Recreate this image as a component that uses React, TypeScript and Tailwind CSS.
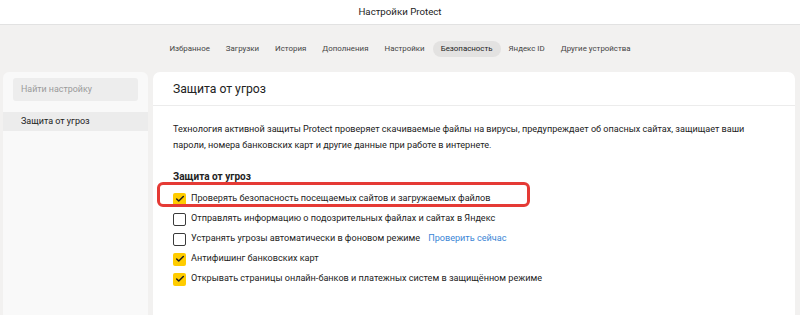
import { Check } from 'lucide-react';

const tabs = [
  { label: "Избранное" },
  { label: "Загрузки" },
  { label: "История" },
  { label: "Дополнения" },
  { label: "Настройки" },
  { label: "Безопасность", active: true },
  { label: "Яндекс ID" },
  { label: "Другие устройства" },
];

const options = [
  { label: "Проверять безопасность посещаемых сайтов и загружаемых файлов", checked: true, highlight: true },
  { label: "Отправлять информацию о подозрительных файлах и сайтах в Яндекс", checked: false },
  { label: "Устранять угрозы автоматически в фоновом режиме", checked: false, link: "Проверить сейчас" },
  { label: "Антифишинг банковских карт", checked: true },
  { label: "Открывать страницы онлайн-банков и платежных систем в защищённом режиме", checked: true },
];

function Checkbox({ checked }: { checked: boolean }) {
  if (checked) {
    return (
      <span className="w-[13px] h-[13px] rounded-[2px] bg-[#ffcc00] flex items-center justify-center shrink-0">
        <Check className="w-[10px] h-[10px] text-[#222]" strokeWidth={3.5} />
      </span>
    );
  }
  return <span className="w-[13px] h-[13px] rounded-[2px] border-[1.5px] border-[#3a3a3a] bg-white shrink-0" />;
}

export default function App() {
  return (
    <div
      className="w-[800px] h-[315px] overflow-hidden bg-[#f2f1f0] flex flex-col text-[#222]"
      style={{ fontFamily: 'Roboto, "Noto Sans", sans-serif' }}
    >
      {/* Title bar */}
      <div className="h-[25px] shrink-0 bg-white border-b border-[#e2e2e2] flex items-center justify-center text-[9.7px] text-[#222]">
        Настройки Protect
      </div>

      {/* Tabs */}
      <nav className="h-[47px] shrink-0 flex items-center justify-center text-[7.9px] text-[#444]">
        {tabs.map((t) => (
          <span
            key={t.label}
            className={
              t.active
                ? "px-2 h-[16px] flex items-center rounded-full bg-[#e3e2e1] text-[#222]"
                : "px-2 h-[16px] flex items-center"
            }
          >
            {t.label}
          </span>
        ))}
      </nav>

      <div className="flex-1 flex gap-[5px] px-[3px] min-h-0">
        {/* Sidebar */}
        <aside className="w-[145px] shrink-0 bg-[#f9f9f9] rounded-t-[6px] pt-[6px]">
          <div className="mx-[10px] h-[23px] rounded-[3px] bg-[#ededed] flex items-center px-[8px] text-[8.9px] text-[#9a9a9a]">
            Найти настройку
          </div>
          <div className="mt-[11px] h-[19px] bg-[#ececec] flex items-center pl-[18px] text-[9px]">
            Защита от угроз
          </div>
        </aside>

        {/* Main panel */}
        <main className="w-[642px] shrink-0 bg-white rounded-t-[7px]">
          <div className="h-[34px] border-b border-[#ececec] flex items-center px-[20px] text-[12.2px] pt-[1px]">
            Защита от угроз
          </div>
          <div className="px-[20px] pt-[15px]">
            <p className="text-[9.1px] leading-[16px] w-[580px]">
              Технология активной защиты Protect проверяет скачиваемые файлы на вирусы, предупреждает об опасных сайтах, защищает ваши пароли, номера банковских карт и другие данные при работе в интернете.
            </p>
            <div className="mt-[16px] text-[10px] font-bold leading-[16px]">Защита от угроз</div>
            <div className="mt-[4px] flex flex-col">
              {options.map((o) => (
                <div key={o.label} className="relative h-[20px] flex items-center gap-[5px] text-[9.1px]">
                  <Checkbox checked={o.checked} />
                  <span>{o.label}</span>
                  {o.link && <span className="ml-[3px] text-[#3b86d6]">{o.link}</span>}
                  {o.highlight && (
                    <span className="absolute left-[-16px] top-[-7px] w-[373px] h-[25px] border-[3px] border-[#e53a35] rounded-[6px]" />
                  )}
                </div>
              ))}
            </div>
            <div className="mt-[24px] text-[10px] font-bold">Защита соединения</div>
          </div>
        </main>
      </div>
    </div>
  );
}
